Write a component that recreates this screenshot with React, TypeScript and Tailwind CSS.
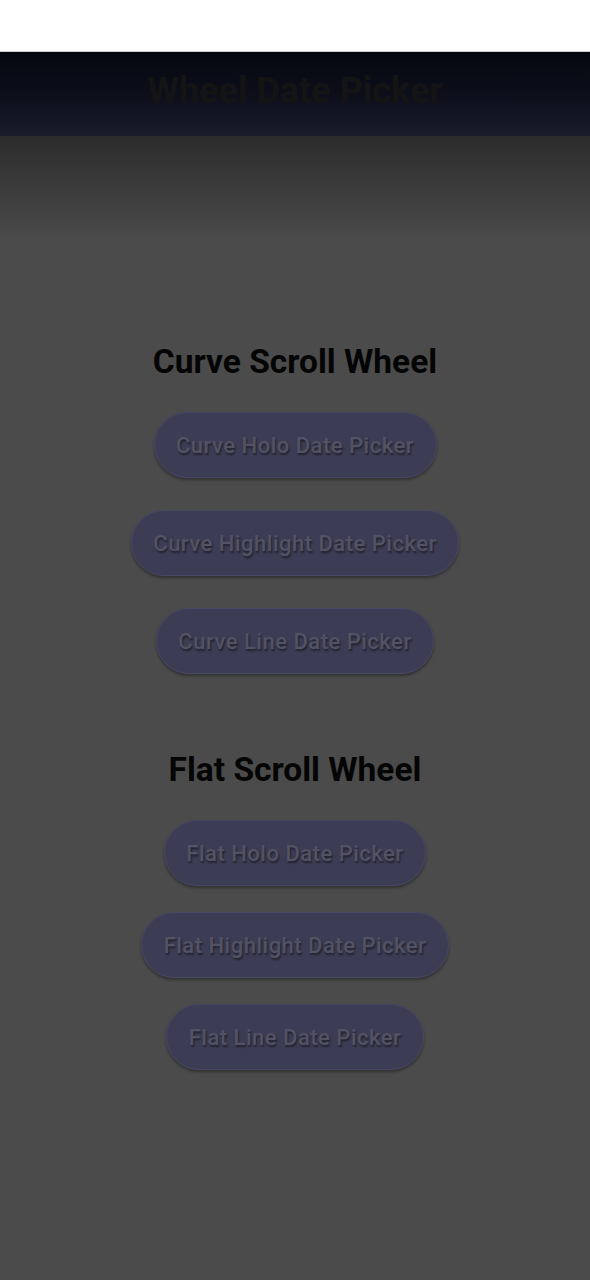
const curve = ["Curve Holo Date Picker", "Curve Highlight Date Picker", "Curve Line Date Picker"];
const flat = ["Flat Holo Date Picker", "Flat Highlight Date Picker", "Flat Line Date Picker"];

function PickerButton({ label }: { label: string }) {
  return (
    <button className="h-[66px] px-[21.5px] rounded-full bg-[#3c3c54] border border-[#484866] shadow-[0_2px_3px_rgba(0,0,0,0.35)] text-[22px] font-medium tracking-[0.5px] text-[#525264] [text-shadow:1px_2px_2px_rgba(0,0,0,0.45)]">
      {label}
    </button>
  );
}

function Section({ title, items, gap }: { title: string; items: string[]; gap: string }) {
  return (
    <div className="flex flex-col items-center">
      <h2 className="text-[33.5px] font-bold text-[#050505] leading-[40px]">{title}</h2>
      <div className={`mt-[30px] flex flex-col items-center ${gap}`}>
        {items.map((t) => (
          <PickerButton key={t} label={t} />
        ))}
      </div>
    </div>
  );
}

export default function App() {
  return (
    <div className="w-[590px] h-[1280px] bg-[#4b4b4b] flex flex-col font-['Roboto',sans-serif]">
      <div className="h-[52px] bg-white border-b border-[#cfcfcf]"></div>
      <header className="h-[84px] pb-[6px] bg-gradient-to-b from-[#060810] via-[#0c0e1a] to-[#1a1c2c] flex items-center justify-center">
        <h1 className="text-[36px] font-bold text-[#141414]">Wheel Date Picker</h1>
      </header>
      <div className="h-[104px] bg-gradient-to-b from-[#2c2c2c] via-[#3b3b3b] to-[#4b4b4b]"></div>
      <main className="flex flex-col items-center pt-[102px]">
        <Section title="Curve Scroll Wheel" items={curve} gap="gap-[32px]" />
        <div className="h-[76px]"></div>
        <Section title="Flat Scroll Wheel" items={flat} gap="gap-[26px]" />
      </main>
    </div>
  );
}
